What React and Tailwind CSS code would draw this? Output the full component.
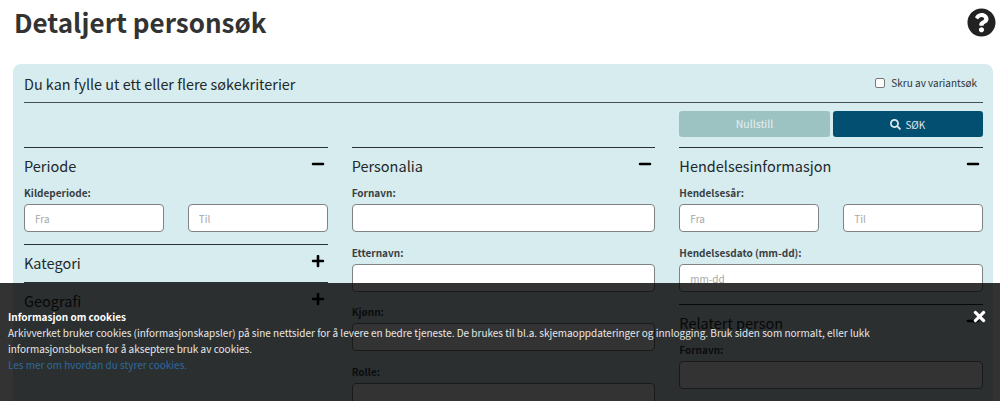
import React from 'react'
import { FaMinus, FaPlus, FaQuestionCircle, FaSearch, FaTimes } from 'react-icons/fa'

const font = "font-['Noto_Sans_CJK_SC','Source_Sans_Pro',sans-serif]"

const Field = ({ label, placeholder, className = '' }) => (
    <div className={className}>
        {label && <label className="block text-[10px] font-bold leading-[15px] text-[#3a3f42] mb-[4px]">{label}</label>}
        <input
            placeholder={placeholder}
            className="block w-full h-[28px] rounded-[4px] border border-[#7d8385] bg-white px-[10px] text-[10px] placeholder:text-[#a5a8a9] outline-none"
        />
    </div>
)

const RangeField = ({ label }) => (
    <div>
        <label className="block text-[10px] font-bold leading-[15px] text-[#3a3f42] mb-[4px]">{label}</label>
        <div className="grid grid-cols-2 gap-6">
            <Field placeholder="Fra" />
            <Field placeholder="Til" />
        </div>
    </div>
)

const Section = ({ title, open, children }) => (
    <section className="border-t border-[#263238]">
        <div className="flex h-[37px] items-center justify-between pr-[3px]">
            <h2 className="text-[14.5px] leading-[24px] pb-[2px] text-[#22282b]">{title}</h2>
            {open ? <FaMinus className="text-[14px] mb-[6px] text-black" /> : <FaPlus className="text-[14px] mb-[6px] text-black" />}
        </div>
        {children}
    </section>
)

const App = () => {
    return (
        <div className={`relative h-[401px] overflow-hidden bg-white ${font}`}>
            <header className="flex items-start justify-between pl-[14px] pr-[4px] pt-[8px] h-[64px]">
                <h1 className="text-[26px] font-bold leading-[28px] text-[#333333]">Detaljert personsøk</h1>
                <FaQuestionCircle className="text-[29px] text-[#222222]" />
            </header>

            <main className="ml-[13px] mr-[7px] rounded-t-[8px] bg-[#d6ecef] pl-[11px] pr-[10px] pb-6">
                <div className="flex h-[39px] items-end justify-between border-b border-[#454d50] pb-[7px]">
                    <p className="text-[14.4px] leading-[22px] text-[#22282b]">Du kan fylle ut ett eller flere søkekriterier</p>
                    <label className="flex items-start gap-[6px] pr-[6px] pb-[4px] text-[10px] leading-[16px] text-[#2d3336]">
                        <input type="checkbox" className="mt-[3px] h-[10px] w-[10px] appearance-none rounded-[2px] border border-[#777] bg-white" />
                        Skru av variantsøk
                    </label>
                </div>

                <div className="grid grid-cols-3 gap-6 pt-[8px]">
                    <div />
                    <div />
                    <div className="flex gap-[3px]">
                        <button className="h-[26px] flex-1 rounded-[3px] bg-[#9dc2c2] text-[10.5px] text-[#e4f0f0]">Nullstill</button>
                        <button className="flex h-[26px] flex-1 items-center justify-center gap-[4px] rounded-[3px] bg-[#034f72] text-[10px] text-[#dfeaee]">
                            <FaSearch className="text-[11px]" /> SØK
                        </button>
                    </div>
                </div>

                <div className="grid grid-cols-3 gap-6 pt-[10px]">
                    <div>
                        <Section title="Periode" open>
                            <div className="pb-[12px]"><RangeField label="Kildeperiode:" /></div>
                        </Section>
                        <Section title="Kategori" />
                        <Section title="Geografi" />
                    </div>
                    <div>
                        <Section title="Personalia" open>
                            <div className="flex flex-col gap-[12.7px]">
                                <Field label="Fornavn:" />
                                <Field label="Etternavn:" />
                                <Field label="Kjønn:" />
                                <Field label="Rolle:" />
                            </div>
                        </Section>
                    </div>
                    <div>
                        <Section title="Hendelsesinformasjon" open>
                            <div className="flex flex-col gap-[13px] pb-[12px]">
                                <RangeField label="Hendelsesår:" />
                                <Field label="Hendelsesdato (mm-dd):" placeholder="mm-dd" />
                            </div>
                        </Section>
                        <Section title="Relatert person" open>
                            <Field label="Fornavn:" />
                        </Section>
                    </div>
                </div>
            </main>

            <div className="absolute inset-x-0 bottom-0 h-[118px] bg-black/80 pl-[8px] pr-[8px] pt-[26px] text-[10px] leading-[16px] text-[#e8e8e8]">
                <p className="font-bold text-white">Informasjon om cookies</p>
                <p className="max-w-[880px]">Arkivverket bruker cookies (informasjonskapsler) på sine nettsider for å levere en bedre tjeneste. De brukes til bl.a. skjemaoppdateringer og innlogging. Bruk siden som normalt, eller lukk informasjonsboksen for å akseptere bruk av cookies.</p>
                <a href="#" className="text-[#2f6a9e]">Les mer om hvordan du styrer cookies.</a>
                <button className="absolute right-[12px] top-[25px] text-white"><FaTimes className="text-[17px]" /></button>
            </div>
        </div>
    )
}

export default App
